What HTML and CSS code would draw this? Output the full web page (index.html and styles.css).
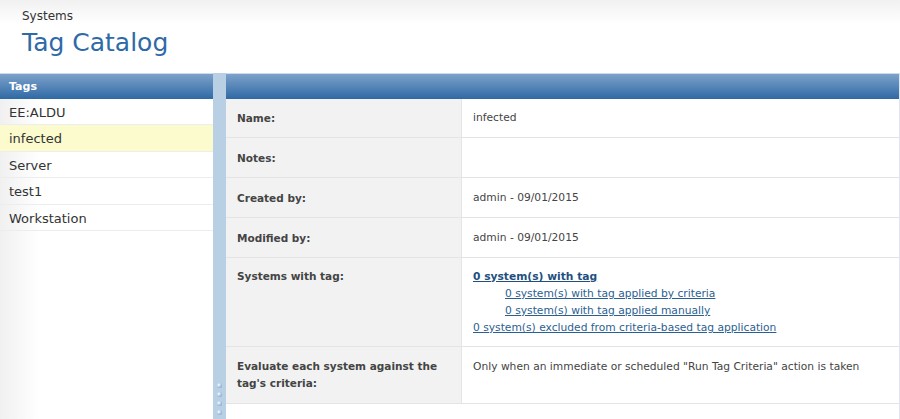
FILE: index.html
```html
<!DOCTYPE html>
<html lang="en">
<head>
<meta charset="UTF-8">
<title>Tag Catalog</title>
<link rel="stylesheet" href="styles.css">
</head>
<body>

<div class="page-header">
  <div class="crumb">Systems</div>
  <h1 class="title">Tag Catalog</h1>
</div>

<div class="layout">
  <div class="left-panel">
    <div class="bar">Tags</div>
    <ul class="tag-list">
      <li>EE:ALDU</li>
      <li class="selected">infected</li>
      <li>Server</li>
      <li>test1</li>
      <li>Workstation</li>
    </ul>
  </div>

  <div class="splitter">
    <div class="grip">
      <span></span><span></span><span></span><span></span>
    </div>
  </div>

  <div class="right-panel">
    <div class="bar"></div>
    <table class="details">
      <tr>
        <th>Name:</th>
        <td>infected</td>
      </tr>
      <tr>
        <th>Notes:</th>
        <td></td>
      </tr>
      <tr>
        <th>Created by:</th>
        <td>admin - 09/01/2015</td>
      </tr>
      <tr>
        <th>Modified by:</th>
        <td>admin - 09/01/2015</td>
      </tr>
      <tr class="tall">
        <th>Systems with tag:</th>
        <td>
          <a href="#" class="main-link">0 system(s) with tag</a><br>
          <a href="#" class="sub-link">0 system(s) with tag applied by criteria</a><br>
          <a href="#" class="sub-link">0 system(s) with tag applied manually</a><br>
          <a href="#">0 system(s) excluded from criteria-based tag application</a>
        </td>
      </tr>
      <tr class="last">
        <th>Evaluate each system against the tag's criteria:</th>
        <td>Only when an immediate or scheduled "Run Tag Criteria" action is taken</td>
      </tr>
    </table>
  </div>
</div>

</body>
</html>
```

FILE: styles.css
```css
  html, body {
    margin: 0;
    padding: 0;
    height: 100%;
    overflow: hidden;
  }
  body {
    font-family: "DejaVu Sans", Verdana, sans-serif;
    color: #444;
    background: #fff;
  }
  .page-header {
    height: 73px;
    box-sizing: border-box;
    padding: 9px 0 0 22px;
    background: linear-gradient(to bottom, #f1f1f1 0px, #fff 24px);
  }
  .crumb {
    font-size: 12px;
    color: #333;
  }
  .title {
    margin: 5px 0 0 0;
    font-size: 25px;
    font-weight: normal;
    color: #2e6aa7;
  }
  .layout {
    display: flex;
    height: 346px;
  }
  .bar {
    height: 26px;
    box-sizing: border-box;
    border-top: 1px solid #cddcec;
    background: linear-gradient(to bottom, #7da2ca, #2f69a5);
    color: #fff;
    font-weight: bold;
    font-size: 11px;
    padding: 6px 0 0 9px;
  }
  .left-panel {
    width: 213px;
    background: linear-gradient(to right, #f0f0f0, #fff 40px);
  }
  .tag-list {
    list-style: none;
    margin: 0;
    padding: 0;
  }
  .tag-list li {
    height: 26.4px;
    box-sizing: border-box;
    padding: 6px 0 0 9px;
    font-size: 13px;
    color: #333;
    border-bottom: 1px solid #ededed;
  }
  .tag-list li.selected {
    background-color: #fbfbcd;
  }
  .splitter {
    width: 13px;
    background-color: #b9cfe4;
    display: flex;
    align-items: flex-end;
    justify-content: center;
  }
  .grip {
    display: flex;
    flex-direction: column;
    gap: 4px;
    margin-bottom: 4px;
  }
  .grip span {
    width: 5px;
    height: 5px;
    border-radius: 50%;
    background: radial-gradient(circle at 35% 35%, #fff, #5b8fc8);
  }
  .right-panel {
    flex: 1;
    border-right: 1px solid #dde6f0;
  }
  .details {
    width: 100%;
    border-collapse: collapse;
  }
  .details th,
  .details td {
    text-align: left;
    vertical-align: top;
    padding: 13px 11px 12px 11px;
    line-height: 14px;
    border-bottom: 1px solid #e4e4e4;
  }
  .details tr:first-child th,
  .details tr:first-child td {
    padding-top: 12px;
  }
  .details th {
    width: 213px;
    font-size: 10.5px;
    background-color: #f2f2f2;
    color: #444;
    border-right: 1px solid #e4e4e4;
  }
  .details td {
    height: 14px;
    font-size: 10.7px;
    color: #444;
  }
  .details tr.tall td,
  .details tr.tall th {
    height: auto;
    line-height: 17px;
    padding-top: 10px;
    padding-bottom: 10px;
  }
  .details tr.last td,
  .details tr.last th {
    height: 35px;
    line-height: 17px;
    padding-top: 11px;
    padding-bottom: 10px;
  }
  .details a {
    color: #2b5f92;
  }
  .details a.main-link {
    font-weight: bold;
    color: #1f4f80;
  }
  .details a.sub-link {
    margin-left: 32px;
  }
```
